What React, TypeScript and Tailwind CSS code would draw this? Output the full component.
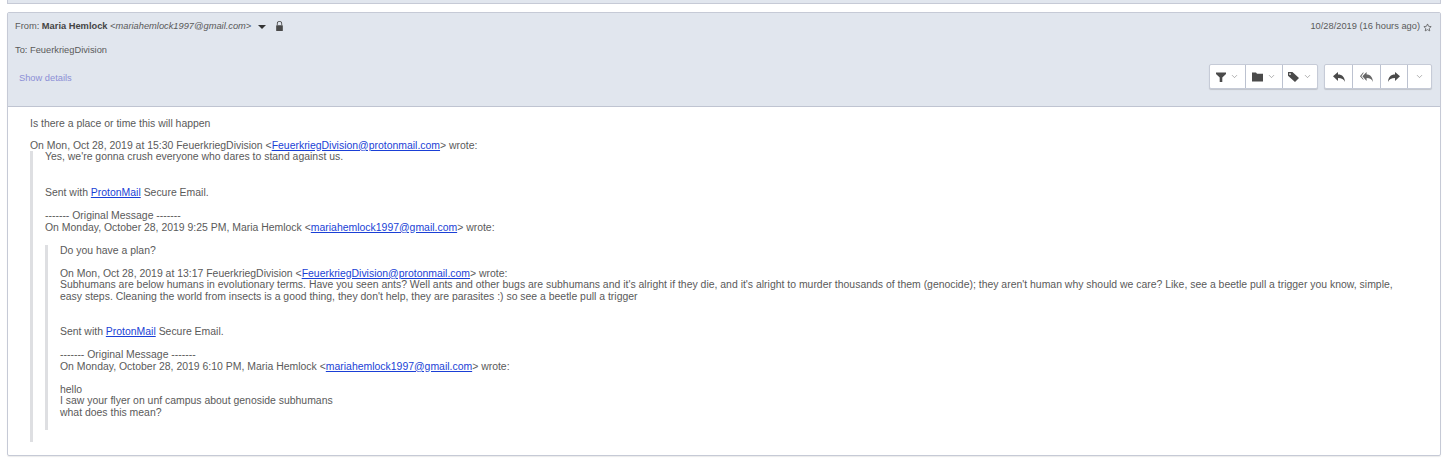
import { ChevronDown } from "lucide-react";

const Chevron = () => <ChevronDown className="size-[9px] text-[#777]" strokeWidth={1.5} />;

const FilterIcon = () => (
  <svg viewBox="0 0 10 10" className="size-[10px] fill-[#4a4a4a]">
    <path d="M0 .5h10v1.6L6.3 5.4V10H3.7V5.4L0 2.1z" />
  </svg>
);

const FolderIcon = () => (
  <svg viewBox="0 0 11 10" className="h-[10px] w-[11px] fill-[#4a4a4a]">
    <path d="M0 .6h4l1 1.2h6V9.6H0z" />
  </svg>
);

const TagIcon = () => (
  <svg viewBox="0 0 11 10" className="h-[10px] w-[11px] fill-[#4a4a4a]">
    <path d="M0 0h4.4L11 6 7 10 0 3.8zM2 1.3a.8.8 0 1 0 .01 0z" fillRule="evenodd" />
  </svg>
);

const ReplyIcon = () => (
  <svg viewBox="0 0 12 10" className="h-[10px] w-[12px] fill-[#4a4a4a]">
    <path d="M5 0v2.6c4.4 0 6.6 2.6 7 7.4-1-2.7-3.4-4-7-4v3L0 4.2z" />
  </svg>
);

const ReplyAllIcon = () => (
  <svg viewBox="0 0 13 10" className="h-[10px] w-[13px] fill-[#666]">
    <path d="M3.4 0v1.2L1.3 4.2l2.1 2.7V8L0 4.2z" />
    <path d="M6.6 0v2.6c3.8 0 6 2.6 6.4 7.4-1-2.7-2.9-4-6.4-4v3L2.4 4.2z" />
  </svg>
);

const ForwardIcon = () => (
  <svg viewBox="0 0 12 10" className="h-[10px] w-[12px] fill-[#4a4a4a]">
    <path d="M7 0v2.6C2.6 2.6.4 5.2 0 10c1-2.7 3.4-4 7-4v3l5-4.8z" />
  </svg>
);

const Star = () => (
  <svg viewBox="0 0 24 24" className="size-[9px] fill-none stroke-[#555]" strokeWidth={2}>
    <path d="M12 2.5l2.9 6.3 6.9.8-5.1 4.7 1.4 6.8-6.1-3.4-6.1 3.4 1.4-6.8L2.3 9.6l6.9-.8z" />
  </svg>
);

const Lock = () => (
  <svg viewBox="0 0 10 12" className="h-[10px] w-[9px] fill-[#4a4a4a]">
    <path d="M2.8 5V3.2a2.2 2.2 0 0 1 4.4 0V5h1V3.2a3.2 3.2 0 0 0-6.4 0V5z" />
    <rect x="1" y="5" width="8" height="7" rx=".6" />
  </svg>
);

const Mail = ({ children }: { children: string }) => (
  <a href="#" className="text-[#1a3fd6] underline">
    {children}
  </a>
);

const ToolButton = ({ children, w }: { children: React.ReactNode; w: string }) => (
  <div className={`flex h-full items-center justify-center gap-[4px] border-r border-[#bcc2d0] last:border-r-0 ${w}`}>
    {children}
  </div>
);

export default function App() {
  return (
    <div className="h-[462px] w-[1448px] overflow-hidden bg-white font-['Liberation_Sans',Arial,sans-serif] text-[10.45px] leading-[11.5px] text-[#5a5a5a]">
      <div className="mx-[7px] h-[4px] w-[1434px] border-x border-b border-[#c6cad6] bg-[#e1e6ee]" />

      <div className="mx-[7px] mt-[8px] h-[444px] w-[1434px] rounded-[2px] border border-[#c6cad6] shadow-[0_1px_1px_rgba(0,0,0,0.08)]">
        <header className="flex h-[94px] justify-between border-b border-[#bfc4d1] bg-[#e1e6ee] pl-[7px] pr-[8px] text-[9.3px]">
          <div className="pt-[8px]">
            <div className="flex h-[12px] items-center">
              <span>From:&nbsp;</span>
              <b className="text-[#444]">Maria Hemlock</b>
              <i>&nbsp;&lt;mariahemlock1997@gmail.com&gt;</i>
              <span className="ml-[7px] h-0 w-0 border-x-[4px] border-t-[4px] border-x-transparent border-t-[#333]" />
              <span className="ml-[9px] flex -translate-y-[1px]">
                <Lock />
              </span>
            </div>
            <div className="mt-[11px] h-[12px] leading-[12px]">To: FeuerkriegDivision</div>
            <div className="ml-[4px] mt-[16px] leading-[12px] text-[#8c8fd6]">Show details</div>
          </div>
          <div className="flex flex-col items-end">
            <div className="mt-[8px] flex h-[12px] items-center gap-[3px]">
              10/28/2019 (16 hours ago) <Star />
            </div>
            <div className="mt-[31px] flex gap-[6px]">
              <div className="flex h-[25px] rounded-[2px] border border-[#c6cbd7] bg-white shadow-[0_1px_1px_rgba(0,0,0,0.15)]">
                <ToolButton w="w-[36px]"><FilterIcon /><Chevron /></ToolButton>
                <ToolButton w="w-[37px]"><FolderIcon /><Chevron /></ToolButton>
                <ToolButton w="w-[34px]"><TagIcon /><Chevron /></ToolButton>
              </div>
              <div className="flex h-[25px] rounded-[2px] border border-[#c6cbd7] bg-white shadow-[0_1px_1px_rgba(0,0,0,0.15)]">
                <ToolButton w="w-[28px]"><ReplyIcon /></ToolButton>
                <ToolButton w="w-[28px]"><ReplyAllIcon /></ToolButton>
                <ToolButton w="w-[27px]"><ForwardIcon /></ToolButton>
                <ToolButton w="w-[23px]"><Chevron /></ToolButton>
              </div>
            </div>
          </div>
        </header>

        <div className="pl-[22px] pr-[36px] pt-[11px]">
          <p>Is there a place or time this will happen</p>
          <p className="mt-[10px]">
            On Mon, Oct 28, 2019 at 15:30 FeuerkriegDivision &lt;<Mail>FeuerkriegDivision@protonmail.com</Mail>&gt; wrote:
          </p>
          <blockquote className="border-l-[3px] border-[#dedfe2] pb-[12px] pl-[12px]">
            <p>Yes, we're gonna crush everyone who dares to stand against us.</p>
            <p className="mt-[24.5px]">
              Sent with <Mail>ProtonMail</Mail> Secure Email.
            </p>
            <p className="mt-[11.5px]">------- Original Message -------</p>
            <p>
              On Monday, October 28, 2019 9:25 PM, Maria Hemlock &lt;<Mail>mariahemlock1997@gmail.com</Mail>&gt; wrote:
            </p>
            <blockquote className="mt-[11.5px] border-l-[3px] border-[#dedfe2] pb-[12px] pl-[12px]">
              <p>Do you have a plan?</p>
              <p className="mt-[11.5px]">
                On Mon, Oct 28, 2019 at 13:17 FeuerkriegDivision &lt;<Mail>FeuerkriegDivision@protonmail.com</Mail>&gt; wrote:
              </p>
              <p>
                Subhumans are below humans in evolutionary terms. Have you seen ants? Well ants and other bugs are subhumans and it's alright if they die, and it's alright to murder thousands of them (genocide); they aren't human why should we care? Like, see a beetle pull a trigger you know, simple, easy steps. Cleaning the world from insects is a good thing, they don't help, they are parasites :) so see a beetle pull a trigger
              </p>
              <p className="mt-[24px]">
                Sent with <Mail>ProtonMail</Mail> Secure Email.
              </p>
              <p className="mt-[11.5px]">------- Original Message -------</p>
              <p>
                On Monday, October 28, 2019 6:10 PM, Maria Hemlock &lt;<Mail>mariahemlock1997@gmail.com</Mail>&gt; wrote:
              </p>
              <p className="mt-[11.5px]">hello</p>
              <p>I saw your flyer on unf campus about genoside subhumans</p>
              <p>what does this mean?</p>
            </blockquote>
          </blockquote>
        </div>
      </div>
    </div>
  );
}
